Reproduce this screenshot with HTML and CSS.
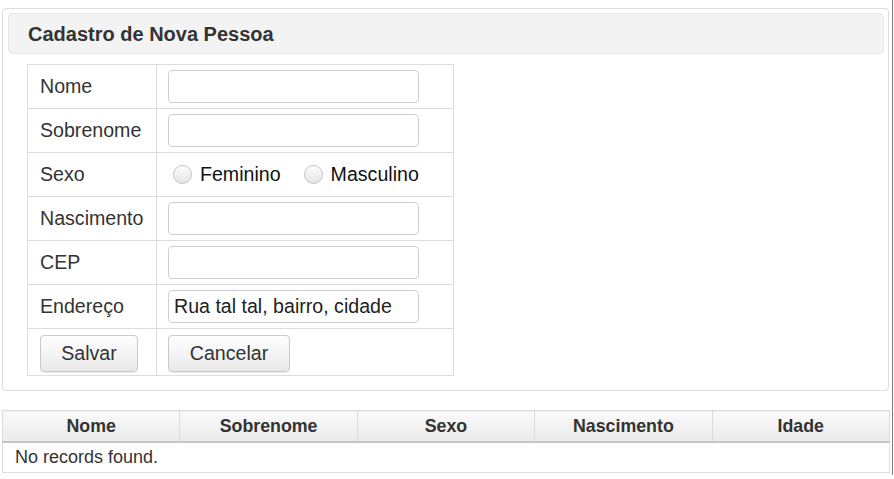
FILE: index.html
```html
<!DOCTYPE html>
<html>
<head>
<meta charset="utf-8">
<link rel="stylesheet" href="styles.css">
</head>
<body>
<div class="page">
  <div class="panel">
    <div class="panel-header">Cadastro de Nova Pessoa</div>
    <div class="panel-body">
      <table class="form">
        <tr><td class="lbl">Nome</td><td class="fld"><input class="txt" type="text"></td></tr>
        <tr><td class="lbl">Sobrenome</td><td class="fld"><input class="txt" type="text"></td></tr>
        <tr><td class="lbl">Sexo</td><td class="fld">
          <div class="radios">
            <span class="radio"></span><span class="rlabel">Feminino</span>
            <span class="radio"></span><span class="rlabel">Masculino</span>
          </div>
        </td></tr>
        <tr><td class="lbl">Nascimento</td><td class="fld"><input class="txt" type="text"></td></tr>
        <tr><td class="lbl">CEP</td><td class="fld"><input class="txt" type="text"></td></tr>
        <tr><td class="lbl">Endereço</td><td class="fld"><input class="txt" type="text" value="Rua tal tal, bairro, cidade"></td></tr>
        <tr class="btnrow"><td class="lbl"><button class="btn btn-salvar">Salvar</button></td><td class="fld"><button class="btn btn-cancel">Cancelar</button></td></tr>
      </table>
    </div>
  </div>
  <table class="data">
    <thead>
      <tr><th>Nome</th><th>Sobrenome</th><th>Sexo</th><th>Nascimento</th><th>Idade</th></tr>
    </thead>
    <tbody>
      <tr><td colspan="5">No records found.</td></tr>
    </tbody>
  </table>
</div>
<div class="edge"></div>
</body>
</html>
```
FILE: styles.css
```css
html, body {
  margin: 0;
  padding: 0;
  background: #fff;
}
body {
  font-family: "Liberation Sans", Arial, sans-serif;
  color: #333;
}
.page {
  padding: 8px 5px 0 2px;
  width: 887px;
}
.panel {
  border: 1px solid #dcdcdc;
  border-radius: 4px;
  padding: 4px 4px 14px 5px;
}
.panel-header {
  background: #f3f3f3;
  border: 1px solid #e8e8e8;
  border-radius: 4px;
  height: 39px;
  line-height: 41px;
  padding-left: 19px;
  font-weight: bold;
  font-size: 20px;
  color: #333;
}
.panel-body {
  padding: 10px 0 0 19px;
}
table.form {
  border-collapse: collapse;
}
table.form td {
  border: 1px solid #dcdcdc;
  height: 43px;
  padding: 0;
  vertical-align: middle;
  font-size: 19.6px;
  color: #333;
}
table.form td.lbl {
  width: 116px;
  padding-left: 12px;
}
table.form td.fld {
  width: 285px;
  padding-left: 11px;
}
table.form tr.btnrow td {
  height: 46px;
}
.txt {
  box-sizing: border-box;
  width: 251px;
  height: 33px;
  border: 1px solid #cfcfcf;
  border-radius: 4px;
  padding: 0 5px;
  margin: 0;
  font-family: "Liberation Sans", Arial, sans-serif;
  font-size: 19.6px;
  color: #222;
  background: #fff;
  display: block;
}
.radios {
  display: flex;
  align-items: center;
}
.radio {
  box-sizing: border-box;
  width: 19px;
  height: 19px;
  border-radius: 50%;
  border: 1px solid #c4c4c4;
  background: linear-gradient(#fdfdfd, #e4e4e4);
  margin-left: 5px;
  margin-right: 8px;
}
.rlabel {
  color: #111;
  font-size: 19.6px;
  margin-right: 18px;
}
.btn {
  box-sizing: border-box;
  height: 37px;
  border: 1px solid #cacaca;
  border-radius: 4px;
  background: linear-gradient(#ffffff, #e9e9e9);
  font-family: "Liberation Sans", Arial, sans-serif;
  font-size: 19.6px;
  color: #333;
  padding: 0;
  margin: 2px 0 0 0;
  box-shadow: 0 1px 1px rgba(0,0,0,0.08);
}
.btn-salvar {
  width: 98px;
}
.btn-cancel {
  width: 122px;
}
table.data {
  margin-top: 19px;
  width: 888px;
  border-collapse: collapse;
  table-layout: fixed;
}
table.data th {
  height: 30px;
  padding: 0;
  border: 1px solid #dcdcdc;
  border-bottom: 2px solid #c6c6c6;
  background: linear-gradient(#fafafa, #ebebeb);
  font-size: 17.8px;
  font-weight: bold;
  color: #333;
  text-align: center;
}
table.data td {
  height: 29px;
  padding: 0 0 0 12px;
  border: 1px solid #dcdcdc;
  font-size: 18px;
  color: #333;
}
.edge {
  position: fixed;
  left: 892px;
  top: 0;
  width: 1px;
  height: 475px;
  background: #7a7a7a;
}
```
